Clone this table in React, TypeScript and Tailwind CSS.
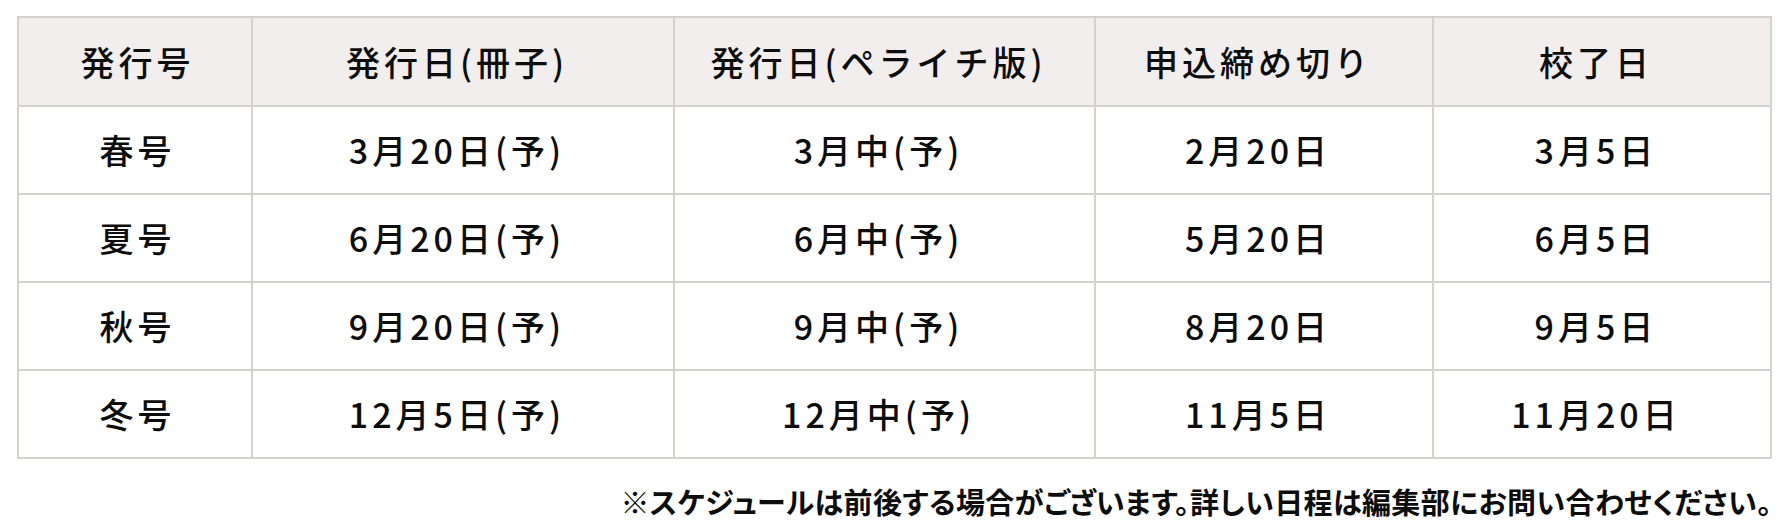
import React from "react";

const rows = [
  ["春号", "3月20日(予)", "3月中(予)", "2月20日", "3月5日"],
  ["夏号", "6月20日(予)", "6月中(予)", "5月20日", "6月5日"],
  ["秋号", "9月20日(予)", "9月中(予)", "8月20日", "9月5日"],
  ["冬号", "12月5日(予)", "12月中(予)", "11月5日", "11月20日"],
];

const heads = ["発行号", "発行日(冊子)", "発行日(ペライチ版)", "申込締め切り", "校了日"];

export default function App() {
  return (
    <div
      className="w-[1792px] h-[532px] bg-white text-[#0d0d0d]"
      style={{ fontFamily: '"Noto Sans CJK JP", "Noto Sans", sans-serif' }}
    >
      <div className="pt-[16px] pl-[17px] w-[1772px]">
        <table className="table-fixed border-collapse w-[1755px] border-2 border-[#d7d1ce]">
          <colgroup>
            <col className="w-[234px]" />
            <col className="w-[422px]" />
            <col className="w-[421px]" />
            <col className="w-[338px]" />
            <col className="w-[338px]" />
          </colgroup>
          <thead>
            <tr className="h-[89px] bg-[#f2eeed]">
              {heads.map((h, i) => (
                <th
                  key={i}
                  className={`border-2 border-[#d7d1ce] text-center text-[34px] leading-[40px] font-medium tracking-[4px] py-0 ${i === 0 ? "pl-[5px] pr-0" : "pl-0 pr-[12px]"}`}
                >
                  {h}
                </th>
              ))}
            </tr>
          </thead>
          <tbody>
            {rows.map((r, ri) => (
              <tr key={ri} className="h-[88px]">
                {r.map((c, ci) => (
                  <td
                    key={ci}
                    className={`border-2 border-[#d7d1ce] text-center text-[34px] leading-[40px] font-medium tracking-[4px] py-0 ${ci === 0 ? "pl-[5px] pr-0" : "pl-0 pr-[12px]"}`}
                  >
                    {c}
                  </td>
                ))}
              </tr>
            ))}
          </tbody>
        </table>
        <p className="mt-[22px] text-right text-[29px] font-bold leading-[40px] tracking-[0.4px] text-[#0d0d0d] [font-feature-settings:'palt']">
          ※スケジュールは前後する場合がございます。詳しい日程は編集部にお問い合わせください。
        </p>
      </div>
    </div>
  );
}
